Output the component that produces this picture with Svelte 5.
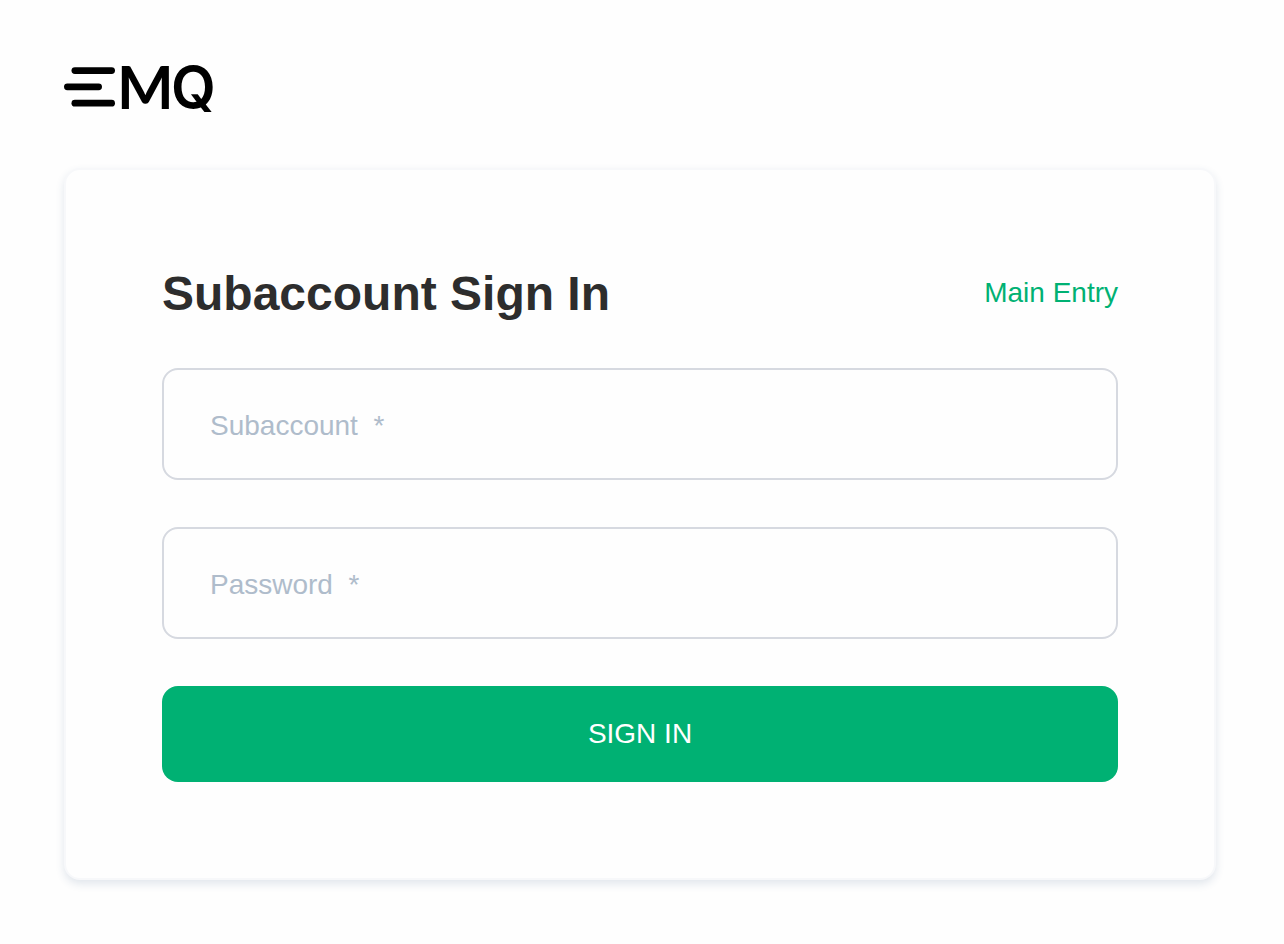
<script>
  let subaccount = $state('');
  let password = $state('');

  function signIn(event) {
    event.preventDefault();
  }
</script>

<svelte:head>
  <title>EMQ - Subaccount Sign In</title>
</svelte:head>

<div class="page">
  <header class="brand">
    <svg class="brand__logo" viewBox="0 0 160 48" role="img" aria-label="EMQ">
      <rect x="7.5" y="3.2" width="43.5" height="6.8" rx="3.4" />
      <rect x="0" y="19.4" width="38" height="6.8" rx="3.4" />
      <rect x="7.5" y="35.8" width="43.5" height="6.8" rx="3.4" />
      <text class="brand__m" x="53" y="45">M</text>
      <text class="brand__q" x="107" y="44">Q</text>
    </svg>
  </header>

  <main class="card">
    <div class="card__header">
      <h1>Subaccount Sign In</h1>
      <a href="#main">Main Entry</a>
    </div>

    <form class="form" onsubmit={signIn}>
      <input
        type="text"
        name="subaccount"
        aria-label="Subaccount"
        placeholder={'Subaccount\u00a0\u00a0*'}
        autocomplete="username"
        bind:value={subaccount}
      />
      <input
        type="password"
        name="password"
        aria-label="Password"
        placeholder={'Password\u00a0\u00a0*'}
        autocomplete="current-password"
        bind:value={password}
      />
      <button type="submit">SIGN IN</button>
    </form>
  </main>
</div>

<style>
  :global(body) {
    margin: 0;
    background: #fefefe;
  }

  .page {
    padding: 64px 68px 64px 64px;
    font-family: 'Liberation Sans', Arial, sans-serif;
    font-size: 28px;
  }

  .brand {
    margin-bottom: 56px;
  }

  .brand__logo {
    display: block;
    width: 160px;
    height: 48px;
    overflow: visible;
  }

  .brand__m {
    font-family: Lato, sans-serif;
    font-size: 60px;
    font-weight: 700;
  }

  .brand__q {
    font-family: Inter, sans-serif;
    font-size: 58px;
    font-weight: 600;
  }

  .card {
    padding: 96px;
    border: 2px solid #f7f8fa;
    border-radius: 16px;
    background: #fefefe;
    box-shadow: 0 4px 8px rgba(47, 87, 124, 0.14);
  }

  .card__header {
    display: flex;
    align-items: flex-start;
    justify-content: space-between;
    margin-bottom: 46px;
  }

  h1 {
    margin: 0;
    color: #2d2d2d;
    font-size: 48px;
    line-height: 56px;
  }

  a {
    color: #00b173;
    line-height: 54px;
    text-decoration: none;
  }

  .form {
    display: flex;
    flex-direction: column;
  }

  input {
    box-sizing: border-box;
    width: 100%;
    height: 112px;
    margin: 0 0 47px;
    padding: 4px 46px 0;
    border: 2px solid #d6d9e0;
    border-radius: 16px;
    background: #fefefe;
    color: #2d2d2d;
    font: inherit;
  }

  input::placeholder {
    color: #afbccb;
    opacity: 1;
  }

  input:focus {
    border-color: #00b173;
    outline: none;
  }

  button {
    height: 96px;
    padding: 0;
    border: 0;
    border-radius: 16px;
    background: #00b173;
    color: #fff;
    font: inherit;
    cursor: pointer;
  }
</style>
